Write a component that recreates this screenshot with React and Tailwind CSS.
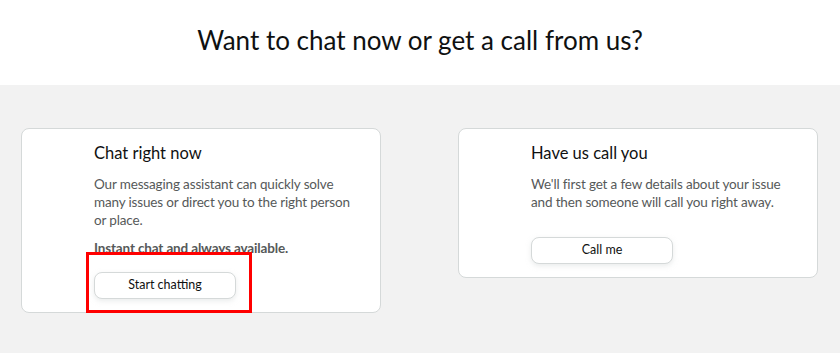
import React from 'react';

const font = { fontFamily: 'Lato, "Liberation Sans", Arial, sans-serif' };

const OptionCard = ({ title, children, action, actionGap, highlight }) => {
  return (
    <div className="w-[360px] bg-white border border-[#d5d9d9] rounded-lg pl-[72px] pr-4 pt-[12px] pb-[13px]">
      <h2 className="text-[16.5px] leading-6 text-[#0f1111]">{title}</h2>
      <div className="mt-[10px] text-[13.5px] leading-[18px] tracking-[-0.15px] text-[#565959]">{children}</div>
      <div className={`relative ${actionGap}`}>
        {action}
        {highlight && (
          <div className="absolute left-[-8px] top-[-20px] w-[166px] h-[61px] border-[3px] border-[#ff0000]" />
        )}
      </div>
    </div>
  );
};

const Button = ({ label }) => (
  <button className="block w-[142px] h-[27px] bg-white border border-[#d5d9d9] rounded-lg text-[12.5px] text-[#0f1111] shadow-[0_2px_5px_rgba(213,217,217,0.5)]">
    {label}
  </button>
);

const App = () => {
  return (
    <div className="w-[840px] h-[353px] bg-[#f2f2f2] overflow-hidden" style={font}>
      {/* Header */}
      <div className="h-[85px] bg-white flex items-center justify-center">
        <h1 className="text-[26px] text-[#0f1111] pb-[4px]">Want to chat now or get a call from us?</h1>
      </div>

      {/* Options */}
      <div className="flex items-start gap-[77px] pl-[21px] pt-[43px]">
        <OptionCard
          title="Chat right now"
          highlight
          actionGap="mt-[15px]"
          action={<Button label="Start chatting" />}
        >
          <p>
            Our messaging assistant can quickly solve many issues or direct you to the right person or
            place.
          </p>
          <p className="mt-[10px] font-bold">Instant chat and always available.</p>
        </OptionCard>

        <OptionCard title="Have us call you" actionGap="mt-[26px]" action={<Button label="Call me" />}>
          <p>We'll first get a few details about your issue and then someone will call you right away.</p>
        </OptionCard>
      </div>
    </div>
  );
};

export default App;
